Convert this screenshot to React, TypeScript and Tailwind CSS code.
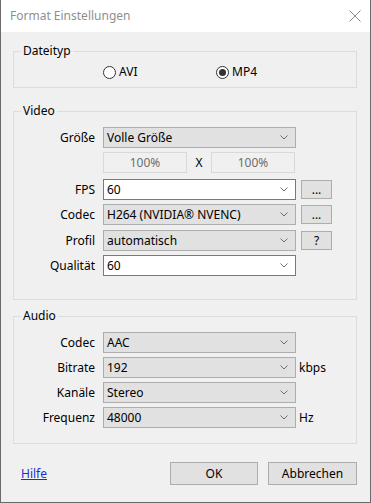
import React from "react";

const font = { fontFamily: "'Noto Sans', 'Open Sans', sans-serif" };

function Chevron() {
  return (
    <svg width="8" height="5" viewBox="0 0 8 5" className="shrink-0">
      <path d="M0.5 0.5 L4 4 L7.5 0.5" fill="none" stroke="#6e6e6e" strokeWidth="1" />
    </svg>
  );
}

function Combo({ value, white = false }: { value: string; white?: boolean }) {
  return (
    <div
      className={
        white
          ? "flex h-[21px] w-[193px] items-center justify-between border border-[#7a7a7a] bg-white pl-[3px] pr-[7px]"
          : "flex h-[21px] w-[193px] items-center justify-between border border-[#adadad] bg-[#e1e1e1] pl-[3px] pr-[7px]"
      }
    >
      <span className="leading-[16px]">{value}</span>
      <Chevron />
    </div>
  );
}

function SmallButton({ label }: { label: string }) {
  return (
    <div className="ml-[5px] flex h-[19px] w-[31px] items-center justify-center border border-[#adadad] bg-[#e1e1e1] leading-[14px]">
      {label}
    </div>
  );
}

function Row({
  label,
  children,
  className = "",
}: {
  label: string;
  children: React.ReactNode;
  className?: string;
}) {
  return (
    <div className={"flex items-center " + className}>
      <div className="w-[81px] shrink-0 text-right leading-[16px]">{label}</div>
      <div className="ml-[8px] flex items-center">{children}</div>
    </div>
  );
}

function Radio({ label, checked = false }: { label: string; checked?: boolean }) {
  return (
    <div className="flex items-center">
      <span className="flex h-[13px] w-[13px] items-center justify-center rounded-full border border-[#333333] bg-white">
        {checked && <span className="h-[7px] w-[7px] rounded-full bg-[#333333]" />}
      </span>
      <span className="ml-[3px] leading-[16px]">{label}</span>
    </div>
  );
}

export default function App() {
  return (
    <div
      className="flex h-[503px] w-[371px] flex-col border-x border-b border-[#6b6b6b] text-[12px] text-black"
      style={font}
    >
      {/* title bar */}
      <div className="flex h-[32px] shrink-0 items-center justify-between bg-white px-[9px]">
        <span className="leading-[16px] text-[#8f8f8f]">Format Einstellungen</span>
        <svg width="12" height="12" viewBox="0 0 12 12">
          <path d="M0.5 0.5 L11.5 11.5 M11.5 0.5 L0.5 11.5" stroke="#8a8a8a" strokeWidth="1" />
        </svg>
      </div>

      <div className="flex flex-1 flex-col bg-[#f0f0f0] pl-[12px] pr-[13px]">
        {/* Dateityp */}
        <fieldset className="mt-[11px] border border-[#dcdcdc] px-0 pb-[7px] pt-[5px]">
          <legend className="ml-[7px] px-[2px] leading-[16px]">Dateityp</legend>
          <div className="flex h-[16px] items-center pl-[89px]">
            <div className="w-[113px]">
              <Radio label="AVI" />
            </div>
            <Radio label="MP4" checked />
          </div>
        </fieldset>

        {/* Video */}
        <fieldset className="mt-[15px] border border-[#dcdcdc] px-0 pb-[23px] pt-[8px]">
          <legend className="ml-[7px] px-[2px] leading-[16px]">Video</legend>
          <Row label="Größe">
            <Combo value="Volle Größe" />
          </Row>
          <div className="mt-[4px] flex items-center pl-[89px]">
            <div className="flex h-[21px] w-[84px] items-center justify-center border border-[#d9d9d9] bg-[#f0f0f0] text-[#6d6d6d]">
              100%
            </div>
            <div className="w-[24px] text-center leading-[16px]">X</div>
            <div className="flex h-[21px] w-[84px] items-center justify-center border border-[#d9d9d9] bg-[#f0f0f0] text-[#6d6d6d]">
              100%
            </div>
          </div>
          <Row label="FPS" className="mt-[6px]">
            <Combo value="60" white />
            <SmallButton label="..." />
          </Row>
          <Row label="Codec" className="mt-[4px]">
            <Combo value="H264 (NVIDIA® NVENC)" />
            <SmallButton label="..." />
          </Row>
          <Row label="Profil" className="mt-[5px]">
            <Combo value="automatisch" />
            <SmallButton label="?" />
          </Row>
          <Row label="Qualität" className="mt-[4px]">
            <Combo value="60" white />
          </Row>
        </fieldset>

        {/* Audio */}
        <fieldset className="mt-[8px] flex flex-col gap-[4px] border border-[#dcdcdc] px-0 pb-[15px] pt-[8px]">
          <legend className="ml-[7px] px-[2px] leading-[16px]">Audio</legend>
          <Row label="Codec">
            <Combo value="AAC" />
          </Row>
          <Row label="Bitrate">
            <Combo value="192" />
            <span className="ml-[3px] leading-[16px]">kbps</span>
          </Row>
          <Row label="Kanäle">
            <Combo value="Stereo" />
          </Row>
          <Row label="Frequenz">
            <Combo value="48000" />
            <span className="ml-[3px] leading-[16px]">Hz</span>
          </Row>
        </fieldset>

        {/* footer */}
        <div className="mt-[18px] flex items-center">
          <a href="#" className="ml-[8px] leading-[16px] text-[#1a2ed6] underline">
            Hilfe
          </a>
          <div className="ml-auto flex gap-[10px]">
            <button className="h-[23px] w-[88px] border border-[#adadad] bg-[#e1e1e1] leading-[16px]">
              OK
            </button>
            <button className="h-[23px] w-[89px] border border-[#adadad] bg-[#e1e1e1] leading-[16px]">
              Abbrechen
            </button>
          </div>
        </div>
      </div>
    </div>
  );
}
